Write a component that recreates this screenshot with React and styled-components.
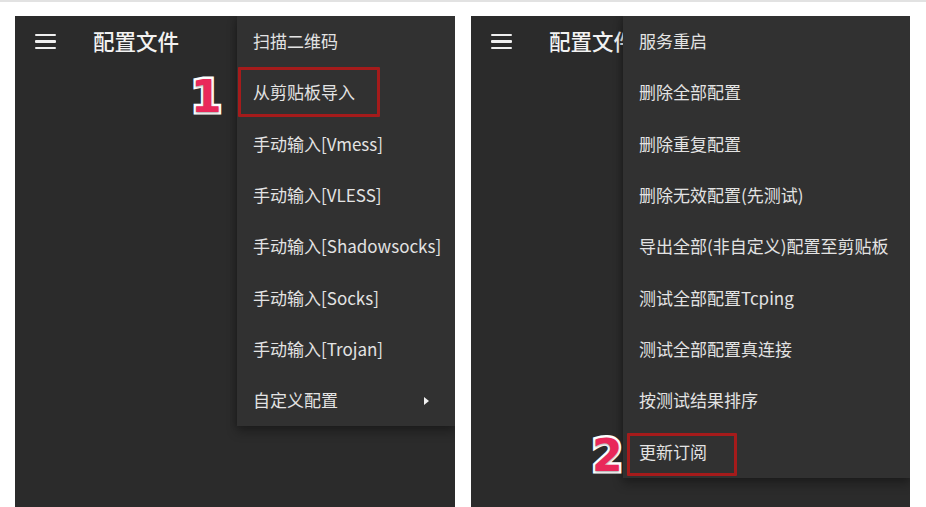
import React from "react";
import styled, { createGlobalStyle } from "styled-components";

const Global = createGlobalStyle`
  html, body { margin: 0; padding: 0; background: #ffffff; }
  body { font-family: "Noto Sans CJK SC", sans-serif; }
  * { box-sizing: border-box; }
`;

const Page = styled.div`
  width: 926px;
  height: 507px;
  overflow: hidden;
  border-top: 2px solid #e2e2e2;
  display: flex;
  gap: 16px;
  padding: 14px 0 0 15px;
`;

const Phone = styled.div`
  position: relative;
  width: ${(p) => p.$w}px;
  height: 491px;
  background: #2b2b2b;
  overflow: hidden;
`;

const Toolbar = styled.div`
  height: 52px;
  display: flex;
  align-items: center;
  padding: 0 0 3px 20px;
  gap: 37px;
`;

const Burger = styled.div`
  width: 21px;
  display: flex;
  flex-direction: column;
  gap: 4px;
  margin-top: 2px;
  span {
    display: block;
    height: 2.5px;
    background: #efefef;
    border-radius: 1px;
  }
`;

const Title = styled.div`
  font-family: "Noto Sans CJK SC", sans-serif;
  font-size: 21.5px;
  line-height: 1;
  font-weight: 500;
  color: #f2f2f2;
`;

const Menu = styled.div`
  position: absolute;
  top: 0;
  right: 0;
  left: ${(p) => p.$left}px;
  background: #313131;
  box-shadow: 0 6px 10px rgba(0, 0, 0, 0.3), -2px 0 5px rgba(0, 0, 0, 0.15);
  display: flex;
  flex-direction: column;
`;

const Item = styled.div`
  height: 51.3px;
  display: flex;
  align-items: center;
  justify-content: space-between;
  padding: 0 26px 2px 16px;
  font-family: "Noto Sans CJK SC", sans-serif;
  font-size: 17px;
  line-height: 1;
  color: #e3e3e3;
  white-space: nowrap;
`;

const SubArrow = styled.span`
  width: 0;
  height: 0;
  margin-top: 2px;
  border-top: 4.5px solid transparent;
  border-bottom: 4.5px solid transparent;
  border-left: 5px solid #f0f0f0;
`;

const Highlight = styled.div`
  position: absolute;
  left: ${(p) => p.$x}px;
  top: ${(p) => p.$y}px;
  width: ${(p) => p.$w}px;
  height: ${(p) => p.$h}px;
  border: 3px solid #a51b1b;
  border-radius: 1px;
  pointer-events: none;
`;

const Step = styled.div`
  position: absolute;
  left: ${(p) => p.$x}px;
  top: ${(p) => p.$y}px;
  font-family: "DejaVu Sans", sans-serif;
  font-weight: 900;
  font-size: 44px;
  line-height: 1;
  color: #e9285a;
  -webkit-text-stroke: 5px #ffffff;
  paint-order: stroke fill;
  text-shadow: 0 1px 2px rgba(0, 0, 0, 0.35);
`;

const leftItems = [
  "扫描二维码",
  "从剪贴板导入",
  "手动输入[Vmess]",
  "手动输入[VLESS]",
  "手动输入[Shadowsocks]",
  "手动输入[Socks]",
  "手动输入[Trojan]",
];

const rightItems = [
  "服务重启",
  "删除全部配置",
  "删除重复配置",
  "删除无效配置(先测试)",
  "导出全部(非自定义)配置至剪贴板",
  "测试全部配置Tcping",
  "测试全部配置真连接",
  "按测试结果排序",
  "更新订阅",
];

function Header() {
  return (
    <Toolbar>
      <Burger>
        <span />
        <span />
        <span />
      </Burger>
      <Title>配置文件</Title>
    </Toolbar>
  );
}

export default function App() {
  return (
    <>
      <Global />
      <Page>
        <Phone $w={440}>
          <Header />
          <Menu $left={222}>
            {leftItems.map((t) => (
              <Item key={t}>{t}</Item>
            ))}
            <Item>
              自定义配置
              <SubArrow />
            </Item>
          </Menu>
          <Highlight $x={223} $y={51} $w={142} $h={50} />
          <Step $x={176} $y={59}>1</Step>
        </Phone>
        <Phone $w={439}>
          <Header />
          <Menu $left={152}>
            {rightItems.map((t) => (
              <Item key={t}>{t}</Item>
            ))}
          </Menu>
          <Highlight $x={156} $y={417} $w={110} $h={43} />
          <Step $x={121} $y={418}>2</Step>
        </Phone>
      </Page>
    </>
  );
}
